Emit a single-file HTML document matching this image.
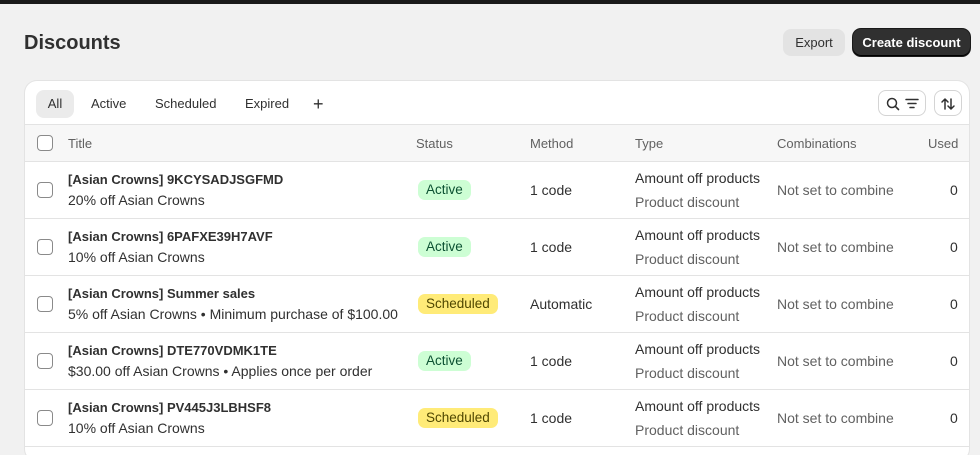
<!DOCTYPE html>
<html><head><style>
*{box-sizing:border-box;margin:0;padding:0}
html,body{width:980px;height:455px;overflow:hidden}
body{background:#f1f1f1;font-family:"Liberation Sans",sans-serif;font-size:13px;color:#303030;position:relative}
.top{position:absolute;left:0;top:0;width:980px;height:4px;background:#1a1a1a}
h1{position:absolute;left:24px;top:32px;font-size:20px;font-weight:bold;color:#303030}
.btn{position:absolute;top:29px;height:27px;border-radius:8px;font-size:13px;line-height:27px;text-align:center}
.exp{left:783px;width:62px;background:#e3e3e3;color:#303030}
.cre{left:853px;width:117px;background:#303030;color:#fff;font-weight:bold;box-shadow:inset 0 -1px 0 #000,0 0 0 1px #1a1a1a}
.card{position:absolute;left:25px;top:81px;width:944px;height:380px;background:#fff;border-radius:12px;box-shadow:0 0 0 1px #e3e3e3;overflow:hidden}
.tabs{height:44px;position:relative}
.tab{position:absolute;top:9px;height:28px;line-height:28px;color:#303030}
.tab.sel{background:#ebebeb;border-radius:8px;left:11px;width:38px;text-align:center}
.ib{position:absolute;top:9px;height:26px;border:1px solid #d4d4d4;border-radius:8px;background:#fff}
.hdr{position:absolute;top:43px;left:0;width:944px;height:38px;background:#f7f7f7;border-top:1px solid #e3e3e3;border-bottom:1px solid #e3e3e3;color:#616161}
.c{position:absolute}
.r{font-size:14px}
.cb{position:absolute;left:12px;width:16px;height:16px;border:1px solid #8a8a8a;border-radius:4px;background:#fff}
.row{position:absolute;left:0;width:944px;height:57px;border-bottom:1px solid #e3e3e3}
.b{font-weight:bold}
.bad{position:absolute;left:393px;top:18px;height:20px;line-height:20px;padding:0 8px;border-radius:7px;font-size:13.5px}
.act{background:#cdfed4;color:#0c5132}
.sch{background:#ffeb78;color:#4f4700}
.g{color:#616161}
</style></head><body>
<div class="top"></div>
<h1>Discounts</h1>
<div class="btn exp">Export</div>
<div class="btn cre">Create discount</div>
<div class="card">
 <div class="tabs">
  <div class="tab sel">All</div>
  <div class="tab" style="left:66px">Active</div>
  <div class="tab" style="left:130px">Scheduled</div>
  <div class="tab" style="left:220px">Expired</div>
  <div class="tab" style="left:288px;font-size:18px">+</div>
  <div class="ib" style="left:853px;width:48px"><svg width="48" height="26" viewBox="0 0 48 26"><circle cx="13" cy="12" r="4.5" fill="none" stroke="#303030" stroke-width="1.5"/><path d="M16.3 15.3L19.5 18.5" stroke="#303030" stroke-width="1.6" stroke-linecap="round"/><path d="M27 8.5h12M29 12.5h8M31 16.5h4" stroke="#303030" stroke-width="1.5" stroke-linecap="round"/></svg></div>
  <div class="ib" style="left:909px;width:28px"><svg width="26" height="26" viewBox="0 0 26 26"><path d="M10 18V8M7 11l3-3 3 3M16 8v10M13 15l3 3 3-3" fill="none" stroke="#303030" stroke-width="1.5" stroke-linecap="round" stroke-linejoin="round"/></svg></div>
 </div>
 <div class="hdr">
  <div class="cb" style="top:10px"></div>
  <div class="c" style="left:43px;top:11px">Title</div>
  <div class="c" style="left:391px;top:11px">Status</div>
  <div class="c" style="left:505px;top:11px">Method</div>
  <div class="c" style="left:610px;top:11px">Type</div>
  <div class="c" style="left:752px;top:11px">Combinations</div>
  <div class="c" style="left:903px;top:11px">Used</div>
 </div>
 <div class="row" style="top:81px">
  <div class="cb" style="top:20px"></div>
  <div class="c b" style="left:43px;top:10px">[Asian Crowns] 9KCYSADJSGFMD</div>
  <div class="c r" style="left:43px;top:30px">20% off Asian Crowns</div>
  <div class="bad act">Active</div>
  <div class="c r" style="left:505px;top:20px">1 code</div>
  <div class="c r" style="left:610px;top:8px">Amount off products</div>
  <div class="c g r" style="left:610px;top:32px">Product discount</div>
  <div class="c g r" style="left:752px;top:20px">Not set to combine</div>
  <div class="c r" style="left:925px;top:20px">0</div>
 </div>
 <div class="row" style="top:138px">
  <div class="cb" style="top:20px"></div>
  <div class="c b" style="left:43px;top:10px">[Asian Crowns] 6PAFXE39H7AVF</div>
  <div class="c r" style="left:43px;top:30px">10% off Asian Crowns</div>
  <div class="bad act">Active</div>
  <div class="c r" style="left:505px;top:20px">1 code</div>
  <div class="c r" style="left:610px;top:8px">Amount off products</div>
  <div class="c g r" style="left:610px;top:32px">Product discount</div>
  <div class="c g r" style="left:752px;top:20px">Not set to combine</div>
  <div class="c r" style="left:925px;top:20px">0</div>
 </div>
 <div class="row" style="top:195px">
  <div class="cb" style="top:20px"></div>
  <div class="c b" style="left:43px;top:10px">[Asian Crowns] Summer sales</div>
  <div class="c r" style="left:43px;top:30px">5% off Asian Crowns • Minimum purchase of $100.00</div>
  <div class="bad sch">Scheduled</div>
  <div class="c r" style="left:505px;top:20px">Automatic</div>
  <div class="c r" style="left:610px;top:8px">Amount off products</div>
  <div class="c g r" style="left:610px;top:32px">Product discount</div>
  <div class="c g r" style="left:752px;top:20px">Not set to combine</div>
  <div class="c r" style="left:925px;top:20px">0</div>
 </div>
 <div class="row" style="top:252px">
  <div class="cb" style="top:20px"></div>
  <div class="c b" style="left:43px;top:10px">[Asian Crowns] DTE770VDMK1TE</div>
  <div class="c r" style="left:43px;top:30px">$30.00 off Asian Crowns • Applies once per order</div>
  <div class="bad act">Active</div>
  <div class="c r" style="left:505px;top:20px">1 code</div>
  <div class="c r" style="left:610px;top:8px">Amount off products</div>
  <div class="c g r" style="left:610px;top:32px">Product discount</div>
  <div class="c g r" style="left:752px;top:20px">Not set to combine</div>
  <div class="c r" style="left:925px;top:20px">0</div>
 </div>
 <div class="row" style="top:309px">
  <div class="cb" style="top:20px"></div>
  <div class="c b" style="left:43px;top:10px">[Asian Crowns] PV445J3LBHSF8</div>
  <div class="c r" style="left:43px;top:30px">10% off Asian Crowns</div>
  <div class="bad sch">Scheduled</div>
  <div class="c r" style="left:505px;top:20px">1 code</div>
  <div class="c r" style="left:610px;top:8px">Amount off products</div>
  <div class="c g r" style="left:610px;top:32px">Product discount</div>
  <div class="c g r" style="left:752px;top:20px">Not set to combine</div>
  <div class="c r" style="left:925px;top:20px">0</div>
 </div>
</div>
</body></html>
